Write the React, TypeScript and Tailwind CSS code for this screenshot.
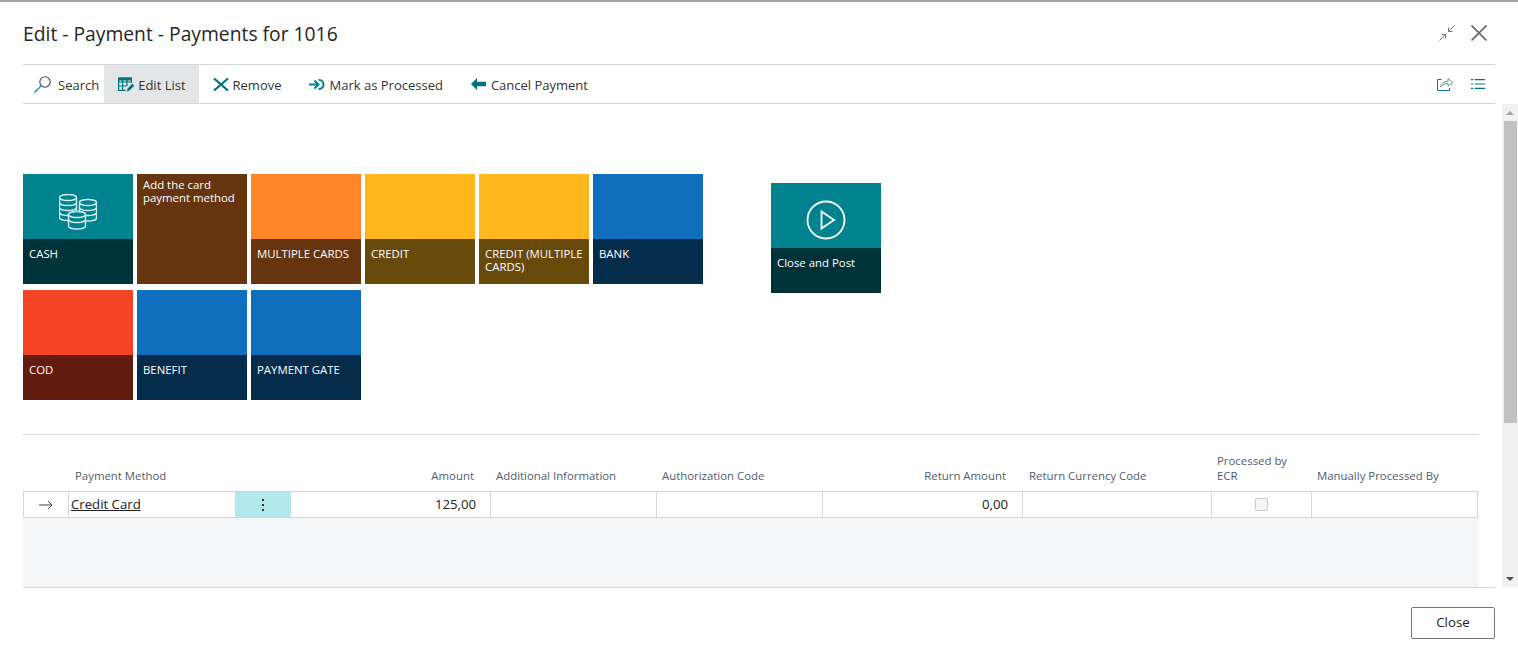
const FONT = "font-['Open_Sans','Noto_Sans',sans-serif]";

const row1 = [
  { label: 'CASH', top: 'bg-[#00838f]', bottom: 'bg-[#003339]', icon: 'coins' },
  { label: 'Add the card payment method', solid: 'bg-[#66350f]' },
  { label: 'MULTIPLE CARDS', top: 'bg-[#ff8629]', bottom: 'bg-[#66350f]' },
  { label: 'CREDIT', top: 'bg-[#ffb71c]', bottom: 'bg-[#66490b]' },
  { label: 'CREDIT (MULTIPLE CARDS)', top: 'bg-[#ffb71c]', bottom: 'bg-[#66490b]' },
  { label: 'BANK', top: 'bg-[#106ebe]', bottom: 'bg-[#062c4c]' },
];

const row2 = [
  { label: 'COD', top: 'bg-[#f44325]', bottom: 'bg-[#621b0f]' },
  { label: 'BENEFIT', top: 'bg-[#106ebe]', bottom: 'bg-[#062c4c]' },
  { label: 'PAYMENT GATE', top: 'bg-[#106ebe]', bottom: 'bg-[#062c4c]' },
];

function CoinStack({ cx, ys }: { cx: number; ys: number[] }) {
  const x = cx - 8.5;
  return (
    <g>
      {[...ys].reverse().map((y) => (
        <path key={y} d={`M${x} ${y}v5a8.500 3 0 0 0 17 0v-5`} />
      ))}
      <ellipse cx={cx} cy={ys[0]} rx="8.500" ry="3" />
    </g>
  );
}

function CoinsIcon() {
  return (
    <svg width="38" height="37" viewBox="0 0 38 37" fill="#00838f" stroke="#d5eef0" strokeWidth="1.400">
      <CoinStack cx={9} ys={[3.5, 8.5, 13.5, 18.5]} />
      <CoinStack cx={29} ys={[8.5, 13.5, 19]} />
      <CoinStack cx={18} ys={[20.5, 27]} />
    </svg>
  );
}

function Tile({ label, top, bottom, solid, icon }: { label: string; top?: string; bottom?: string; solid?: string; icon?: string }) {
  if (solid) {
    return (
      <div className={`w-[110px] h-[110px] px-1.5 pt-1 text-white text-[11.400px] leading-[13px] ${solid}`}>
        {label}
      </div>
    );
  }
  return (
    <div className="w-[110px] h-[110px] flex flex-col text-white text-[11.400px] leading-[13px]">
      <div className={`h-[65px] pt-[11px] flex items-center justify-center ${top}`}>{icon === 'coins' && <CoinsIcon />}</div>
      <div className={`h-[45px] px-1.5 pt-2 ${bottom}`}>{label}</div>
    </div>
  );
}

function ToolButton({ icon, label, active, className }: { icon: React.ReactNode; label: string; active?: boolean; className?: string }) {
  return (
    <div className={`h-[38px] flex items-center ${active ? 'bg-[#e4e5e6]' : ''} ${className ?? ''}`}>
      {icon}
      <span className="pt-[4px]">{label}</span>
    </div>
  );
}

const headers = [
  { label: '', align: '' },
  { label: 'Payment Method', align: 'pl-[7px]' },
  { label: '', align: '' },
  { label: 'Amount', align: 'text-right pr-[16px]' },
  { label: 'Additional Information', align: 'pl-1.5' },
  { label: 'Authorization Code', align: 'pl-1.5' },
  { label: 'Return Amount', align: 'text-right pr-[16px]' },
  { label: 'Return Currency Code', align: 'pl-[7px]' },
  { label: 'Processed by ECR', align: 'pl-1.5 pr-5' },
  { label: 'Manually Processed By', align: 'pl-1.5' },
];

const COLS = 'grid grid-cols-[45px_167px_55px_200px_166px_166px_200px_189px_100px_167px]';

export default function App() {
  return (
    <div className={`w-[1518px] h-[661px] flex flex-col bg-white overflow-hidden text-[#212121] ${FONT}`}>
      <div className="h-[2px] bg-[#a3a3a3]" />

      {/* Title */}
      <div className="h-[62px] flex items-center justify-between pl-[23px] pr-[31px]">
        <h1 className="pt-[2px] text-[19.300px] font-medium text-[#262626]">Edit - Payment - Payments for 1016</h1>
        <div className="flex items-center gap-[16px]">
          <svg width="16" height="16" viewBox="0 0 16 16" fill="none" stroke="#777" strokeWidth="1">
            <path d="M15.500.5L9.500 6.500M9.500 2.500v4h4M.5 15.500l6-6M2.500 9.500h4v4" />
          </svg>
          <svg width="16" height="16" viewBox="0 0 16 16" fill="none" stroke="#6a6a6a" strokeWidth="1.700">
            <path d="M.5.5l15 15M15.500.5l-15 15" />
          </svg>
        </div>
      </div>

      {/* Action bar */}
      <div className="mx-[23px] h-[40px] border-y border-[#d3d5d8] flex items-center justify-between text-[13px] text-[#333]">
        <div className="flex items-center">
          <ToolButton
            icon={
              <svg width="17" height="17" viewBox="0 0 17 17" fill="none" strokeWidth="1.100">
                <circle cx="11" cy="6" r="5.200" stroke="#3d4a4c" />
                <path d="M7.200 9.800L.5 16.500" stroke="#00838f" />
              </svg>
            }
            label="Search"
            className="pl-[11px] pr-[5px] gap-[7px]"
          />
          <ToolButton
            active
            icon={
              <svg width="16" height="15" viewBox="0 0 16 15" fill="none" stroke="#00757f" strokeWidth="1.200">
                <path d="M.6 1h12.800v5M.6 1v12.400h7M.6 5h12.800M.6 9h8M4.600 1v12.400M9 1v8" />
                <path d="M.6.5h12.800v3H.6z" fill="#00757f" stroke="none" />
                <path d="M8.500 15l.8-3.400 5-5 2.200 2.200-5 5z" fill="#00757f" stroke="#e4e5e6" strokeWidth=".5" />
              </svg>
            }
            label="Edit List"
            className="pl-[14px] pr-[13px] gap-1"
          />
          <ToolButton
            icon={
              <svg width="16" height="13" viewBox="0 0 16 13" fill="none" stroke="#00757f" strokeWidth="2.200">
                <path d="M1 .5l14 12M15 .5L1 12.500" />
              </svg>
            }
            label="Remove"
            className="pl-[14px] gap-1"
          />
          <ToolButton
            icon={
              <svg width="16" height="11" viewBox="0 0 16 11" fill="none" stroke="#00838f" strokeWidth="1.900">
                <path d="M0 5.500h9M5.500 1.500l4 4-4 4M9.500.9c3 .2 5 2 5 4.600s-2 4.400-5 4.600" />
              </svg>
            }
            label="Mark as Processed"
            className="ml-[27px] gap-[5px]"
          />
          <ToolButton
            icon={
              <svg width="15" height="12" viewBox="0 0 15 12" fill="#00757f">
                <path d="M0 6l6-6v3.800h9v4.400H6V12z" />
              </svg>
            }
            label="Cancel Payment"
            className="ml-[28px] gap-[5px]"
          />
        </div>
        <div className="flex items-center gap-[17px] pr-[10px]">
          <svg width="17" height="14" viewBox="0 0 17 14" fill="none" strokeWidth="1">
            <path d="M4.500 2.500H.5v11h12V11" stroke="#00838f" />
            <path d="M3.500 10c.5-3.500 3-5.500 7.500-5.500V1.500L16 5.500 11 9V6.500C8 6.500 5.500 7.500 3.500 10z" stroke="#6f8f94" />
          </svg>
          <svg width="14" height="10" viewBox="0 0 14 10" fill="none" stroke="#00757f" strokeWidth="1.200">
            <path d="M0 .6h2M3.500.6H14M0 5h2M3.500 5H14M0 9.400h2M3.500 9.400H14" />
          </svg>
        </div>
      </div>

      {/* Scrollable body */}
      <div className="h-[483px] flex">
        <div className="w-[1478px] ml-[23px] flex flex-col">
          <div className="pt-[70px] flex">
            <div className="w-[684px] flex flex-wrap gap-x-1 gap-y-1.5">
              {row1.map((t) => (
                <Tile key={t.label} {...t} />
              ))}
              {row2.map((t) => (
                <Tile key={t.label} {...t} />
              ))}
            </div>
            <div className="ml-[64px] mt-[9px] w-[110px] h-[110px] flex flex-col text-white text-[11.400px] leading-[13px]">
              <div className="h-[65px] pt-2 bg-[#00838f] flex items-center justify-center">
                <svg width="40" height="40" viewBox="0 0 40 40" fill="none" stroke="white" strokeWidth="1.800">
                  <circle cx="20" cy="20" r="18.500" />
                  <path d="M15.500 11.500v17L28 20z" />
                </svg>
              </div>
              <div className="h-[45px] bg-[#003339] px-1.5 pt-2">Close and Post</div>
            </div>
          </div>

          <div className="w-[1455px] mt-[34px] border-t border-[#d3d5d8]" />

          {/* Lines table */}
          <div className={`${COLS} w-[1455px] h-[56px] items-end pb-[8px] text-[11.400px] leading-[15px] text-[#505c6d]`}>
            {headers.map((h, i) => (
              <div key={i} className={h.align}>
                {h.label}
              </div>
            ))}
          </div>
          <div className={`${COLS} w-[1455px] h-[27px] border border-[#d3d5d8] text-[13.200px] leading-[25px]`}>
            <div className="flex items-center justify-center border-r border-[#d3d5d8]">
              <svg width="14" height="10" viewBox="0 0 14 10" fill="none" stroke="#444" strokeWidth="1">
                <path d="M0 5h13M9 1l4 4-4 4" />
              </svg>
            </div>
            <div className="pl-[2px] border-r border-[#d3d5d8]">
              <span className="underline">Credit Card</span>
            </div>
            <div className="bg-[#b2e8eb] pr-[2px] flex flex-col items-center justify-center gap-[3px]">
              <span className="w-[2px] h-[2px] bg-[#333]" />
              <span className="w-[2px] h-[2px] bg-[#333]" />
              <span className="w-[2px] h-[2px] bg-[#333]" />
            </div>
            <div className="text-right pr-[14px] border-r border-[#d3d5d8]">125,00</div>
            <div className="border-r border-[#d3d5d8]" />
            <div className="border-r border-[#d3d5d8]" />
            <div className="text-right pr-[14px] border-r border-[#d3d5d8]">0,00</div>
            <div className="border-r border-[#d3d5d8]" />
            <div className="flex items-center justify-center border-r border-[#d3d5d8]">
              <span className="w-[13px] h-[13px] rounded-[2px] border border-[#c8c8c8] bg-[#f4f5f6]" />
            </div>
            <div />
          </div>
          <div className="w-[1455px] flex-1 bg-[#f5f6f8]" />
        </div>

        {/* Scrollbar */}
        <div className="ml-[1px] w-[16px] bg-[#f1f1f1] flex flex-col items-center">
          <div className="h-[17px] flex items-center">
            <div className="border-x-[4px] border-x-transparent border-b-[4px] border-b-[#a3a3a3]" />
          </div>
          <div className="ml-[1px] w-[13px] h-[302px] bg-[#c1c1c1]" />
          <div className="flex-1" />
          <div className="h-[17px] flex items-center">
            <div className="border-x-[4px] border-x-transparent border-t-[4px] border-t-[#505050]" />
          </div>
        </div>
      </div>

      {/* Footer */}
      <div className="mx-[23px] flex-1 border-t border-[#d3d5d8] flex justify-end items-start pt-[19px]">
        <button className="w-[84px] h-[32px] rounded-[2px] border border-[#777] text-[13.300px] text-[#212121] bg-white">
          Close
        </button>
      </div>
    </div>
  );
}
